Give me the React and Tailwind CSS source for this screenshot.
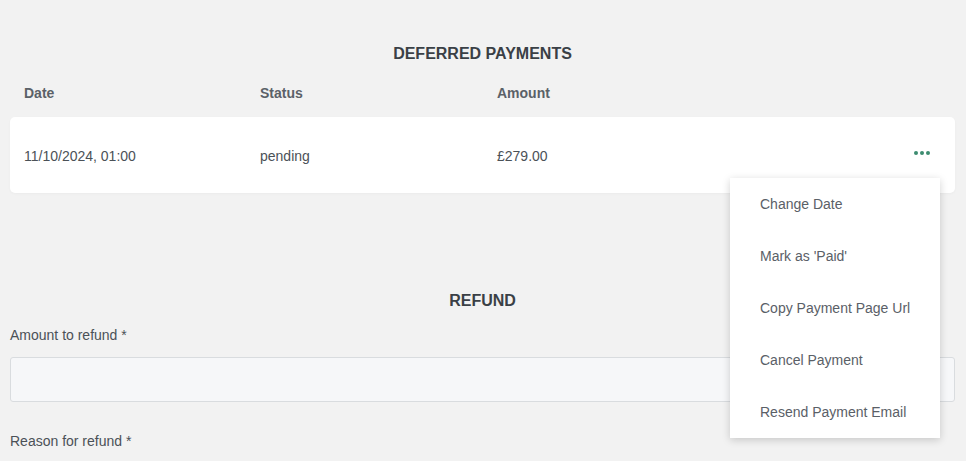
import React from "react";

const menuItems = [
  "Change Date",
  "Mark as 'Paid'",
  "Copy Payment Page Url",
  "Cancel Payment",
  "Resend Payment Email",
];

const App = () => {
  return (
    <div
      className="min-h-[461px] w-full bg-[#f2f2f2] overflow-hidden pl-[10px] pr-[11px]"
      style={{ fontFamily: '"Liberation Sans", Arial, sans-serif' }}
    >
      <h2 className="pt-[42px] text-center text-[16px] leading-6 font-bold text-[#3a4046]">
        DEFERRED PAYMENTS
      </h2>

      {/* table header */}
      <div className="mt-[17px] flex pl-[14px] text-[14px] leading-5 font-bold text-[#5b6168]">
        <div className="w-[236px]">Date</div>
        <div className="w-[237px]">Status</div>
        <div>Amount</div>
      </div>

      <div className="relative mt-[14px]">
        <div className="flex h-[76px] items-center rounded-[5px] bg-white pl-[14px] pr-[25px] pt-[3px] text-[14px] text-[#4b5157] shadow-[0_1px_3px_rgba(0,0,0,0.03)]">
          <div className="w-[236px]">11/10/2024, 01:00</div>
          <div className="w-[237px]">pending</div>
          <div className="flex-1">£279.00</div>
          <button className="flex items-center gap-[2px] pb-[8px]">
            <span className="h-[4px] w-[4px] rounded-full bg-[#3d8c70]" />
            <span className="h-[4px] w-[4px] rounded-full bg-[#3d8c70]" />
            <span className="h-[4px] w-[4px] rounded-full bg-[#3d8c70]" />
          </button>
        </div>

        {/* dropdown menu */}
        <div className="absolute left-[720px] top-[61px] z-10 w-[210px] bg-white shadow-[0_2px_8px_rgba(0,0,0,0.18)]">
          {menuItems.map((item) => (
            <div
              key={item}
              className="flex h-[52px] items-center pl-[30px] pt-[1px] text-[14px] text-[#5a6067]"
            >
              {item}
            </div>
          ))}
        </div>
      </div>

      <h2 className="mt-[96px] text-center text-[16px] leading-6 font-bold text-[#3a4046]">
        REFUND
      </h2>

      <label className="mt-[12px] block text-[14px] leading-5 text-[#4b5157]">
        Amount to refund *
      </label>
      <input
        type="text"
        className="mt-[12px] block h-[45px] w-full rounded-[3px] border border-[#d9dcdf] bg-[#f6f7f9] px-3 outline-none"
      />

      <label className="mt-[29px] block text-[14px] leading-5 text-[#4b5157]">
        Reason for refund *
      </label>
    </div>
  );
};

export default App;
